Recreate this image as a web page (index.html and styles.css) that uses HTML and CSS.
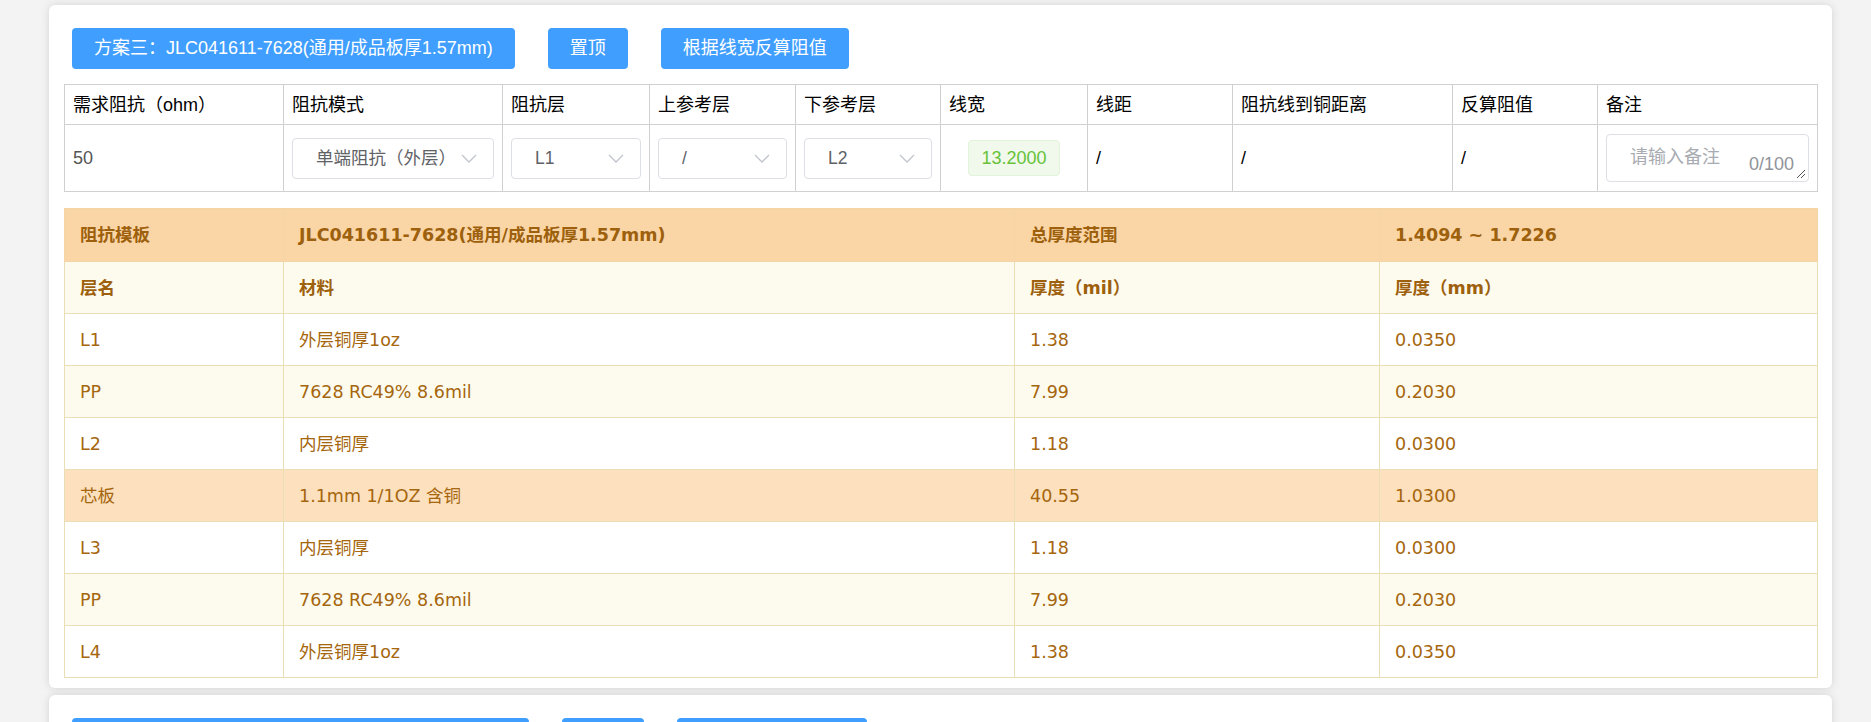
FILE: index.html
```html
<!DOCTYPE html>
<html>
	<head>
		<meta charset="UTF-8">
		<title>阻抗计算</title>
		<link rel="stylesheet" href="styles.css">
	</head>
	<body>
		<!-- 方案三 -->
		<div class="card">
			<div class="btns">
				<span class="btn">方案三：JLC041611-7628(通用/成品板厚1.57mm)</span>
				<span class="btn">置顶</span>
				<span class="btn">根据线宽反算阻值</span>
			</div>
			<table class="calc">
				<colgroup>
					<col style="width:219px"><col style="width:219px"><col style="width:147px"><col style="width:146px"><col style="width:145px">
					<col style="width:147px"><col style="width:145px"><col style="width:220px"><col style="width:145px"><col style="width:220px">
				</colgroup>
				<tr class="head">
					<td>需求阻抗（ohm）</td>
					<td>阻抗模式</td>
					<td>阻抗层</td>
					<td>上参考层</td>
					<td>下参考层</td>
					<td>线宽</td>
					<td>线距</td>
					<td>阻抗线到铜距离</td>
					<td>反算阻值</td>
					<td>备注</td>
				</tr>
				<tr class="row">
					<td class="num">50</td>
					<td><div class="sel"><span class="sel-t">单端阻抗（外层）</span><svg class="arrow" width="16" height="9" viewBox="0 0 16 9"><polyline points="1,1 8,8 15,1" fill="none" stroke="#c0c4cc" stroke-width="1.3"/></svg></div></td>
					<td><div class="sel"><span class="sel-t">L1</span><svg class="arrow" width="16" height="9" viewBox="0 0 16 9"><polyline points="1,1 8,8 15,1" fill="none" stroke="#c0c4cc" stroke-width="1.3"/></svg></div></td>
					<td><div class="sel"><span class="sel-t">/</span><svg class="arrow" width="16" height="9" viewBox="0 0 16 9"><polyline points="1,1 8,8 15,1" fill="none" stroke="#c0c4cc" stroke-width="1.3"/></svg></div></td>
					<td><div class="sel"><span class="sel-t">L2</span><svg class="arrow" width="16" height="9" viewBox="0 0 16 9"><polyline points="1,1 8,8 15,1" fill="none" stroke="#c0c4cc" stroke-width="1.3"/></svg></div></td>
					<td class="mid"><span class="tag">13.2000</span></td>
					<td>/</td>
					<td>/</td>
					<td>/</td>
					<td>
						<div class="area">
							<span class="ph">请输入备注</span>
							<span class="count">0/100</span>
							<svg class="grip" width="10" height="10" viewBox="0 0 10 10"><line x1="1" y1="9" x2="9" y2="1" stroke="#555" stroke-width="1"/><line x1="5" y1="9" x2="9" y2="5" stroke="#555" stroke-width="1"/></svg>
						</div>
					</td>
				</tr>
			</table>
			<table class="tpl">
				<colgroup>
					<col style="width:219px"><col style="width:731px"><col style="width:365px"><col style="width:438px">
				</colgroup>
				<tr class="t1">
					<td>阻抗模板</td>
					<td>JLC041611-7628(通用/成品板厚1.57mm)</td>
					<td>总厚度范围</td>
					<td>1.4094 ~ 1.7226</td>
				</tr>
				<tr class="t2">
					<td>层名</td>
					<td>材料</td>
					<td>厚度（mil）</td>
					<td>厚度（mm）</td>
				</tr>
				<tr><td>L1</td><td>外层铜厚1oz</td><td>1.38</td><td>0.0350</td></tr>
				<tr class="alt"><td>PP</td><td>7628 RC49% 8.6mil</td><td>7.99</td><td>0.2030</td></tr>
				<tr><td>L2</td><td>内层铜厚</td><td>1.18</td><td>0.0300</td></tr>
				<tr class="core"><td>芯板</td><td>1.1mm 1/1OZ 含铜</td><td>40.55</td><td>1.0300</td></tr>
				<tr><td>L3</td><td>内层铜厚</td><td>1.18</td><td>0.0300</td></tr>
				<tr class="alt"><td>PP</td><td>7628 RC49% 8.6mil</td><td>7.99</td><td>0.2030</td></tr>
				<tr><td>L4</td><td>外层铜厚1oz</td><td>1.38</td><td>0.0350</td></tr>
			</table>
		</div>
		<!-- 下一个方案 只露出按钮的上边 -->
		<div class="card">
			<div class="btns">
				<span class="btn b4"></span>
				<span class="btn b5"></span>
				<span class="btn b6"></span>
			</div>
			<div class="blank"></div>
		</div>
	</body>
</html>
```

FILE: styles.css
```css
*{
	margin: 0;
	padding: 0;
	box-sizing: border-box;
}
body{
	background-color: #f3f3f3;
	padding: 5px 39px 0 49px;
	font-family: "Liberation Sans", "Noto Sans CJK SC", sans-serif;
	font-size: 18px;
	color: #000;
}
.card{
	background-color: #fff;
	border-radius: 6px;
	box-shadow: 0 0 8px rgba(0,0,0,0.13);
	padding: 23px 15px 10px;
	margin-bottom: 7px;
}
.btns{
	display: flex;
	gap: 33px;
	padding-left: 8px;
	margin-bottom: 15px;
}
.btn{
	display: inline-block;
	height: 41px;
	line-height: 41px;
	padding: 0 22px;
	background-color: #409eff;
	color: #fff;
	border-radius: 4px;
	white-space: nowrap;
}
.b4{
	width: 457px;
}
.b5{
	width: 82px;
}
.b6{
	width: 190px;
}
.blank{
	height: 200px;
}
table{
	border-collapse: collapse;
	table-layout: fixed;
	width: 1753px;
}
.calc td{
	border: 1px solid #d0d0d0;
	padding: 0 8px;
	line-height: 24px;
	white-space: nowrap;
	overflow: hidden;
}
.calc .head td{
	height: 40px;
}
.calc .row td{
	height: 67px;
}
.calc .num{
	color: #555;
}
.calc .mid{
	text-align: center;
}
.sel{
	height: 41px;
	border: 1px solid #dcdfe6;
	border-radius: 4px;
	display: flex;
	align-items: center;
	padding: 0 16px 0 23px;
	color: #606266;
	font-size: 17.5px;
}
.sel-t{
	flex: 1;
	overflow: hidden;
	white-space: nowrap;
}
.arrow{
	flex: none;
	margin-left: 14px;
}
.tag{
	display: inline-block;
	height: 36px;
	line-height: 34px;
	padding: 0 12px;
	background-color: #f0f9eb;
	border: 1px solid #e1f3d8;
	border-radius: 4px;
	color: #67c23a;
}
.area{
	position: relative;
	height: 48px;
	border: 1px solid #dcdfe6;
	border-radius: 4px;
	padding: 10px 0 0 23px;
	color: #a8abb2;
}
.count{
	position: absolute;
	right: 14px;
	bottom: 9px;
	font-size: 18px;
	line-height: 16px;
	color: #909399;
}
.grip{
	position: absolute;
	right: 2px;
	bottom: 2px;
}
.tpl{
	margin-top: 16px;
	font-family: "DejaVu Sans", "Noto Sans CJK SC", sans-serif;
	font-size: 17.5px;
	color: #a5660d;
}
.tpl td{
	border: 1px solid #eadfb4;
	height: 52px;
	padding: 0 15px;
	line-height: 24px;
	white-space: nowrap;
}
.tpl .t1{
	background-color: #fad5a5;
	font-weight: bold;
	color: #9d600c;
}
.tpl .t1 td{
	height: 53px;
	border-color: #f5d4a6;
}
.tpl .t2{
	background-color: #fdfbee;
	font-weight: bold;
	color: #9d600c;
}
.tpl .alt{
	background-color: #fdfbee;
}
.tpl .core{
	background-color: #fde0bd;
}
```
